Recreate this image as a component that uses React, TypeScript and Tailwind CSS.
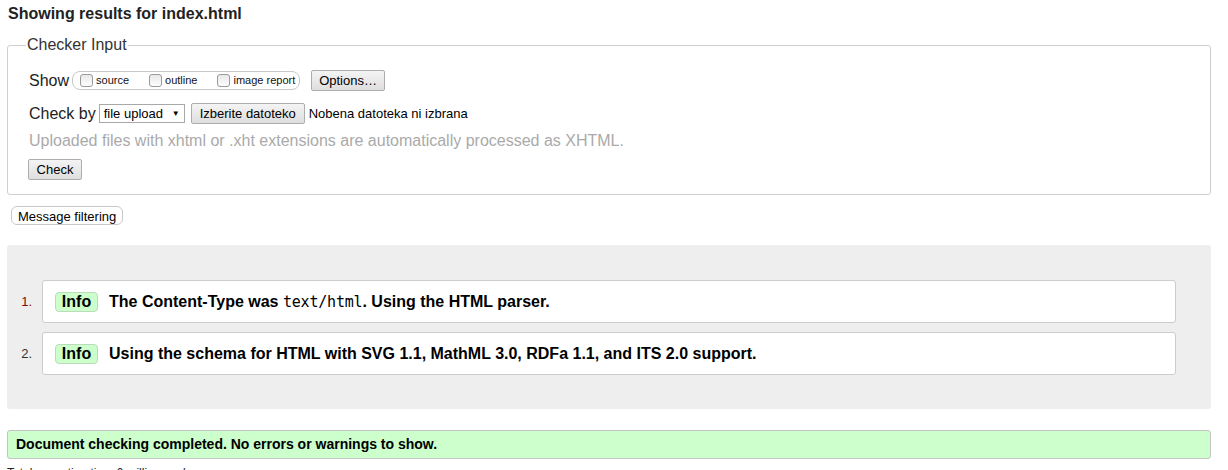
import React from 'react';

const btn =
  'inline-flex items-center justify-center h-[21px] px-[7px] text-[13px] text-black border border-[#adadad] rounded-[2px] bg-gradient-to-b from-[#f4f4f4] to-[#dedede]';

const Checkbox: React.FC<{ label: string; className?: string }> = ({ label, className }) => (
  <span className={`inline-flex items-center ${className ?? ''}`}>
    <span className="w-[13px] h-[13px] rounded-[3px] border border-[#9a9a9a] bg-gradient-to-b from-[#e9e9e9] to-[#fdfdfd]" />
    <span className="ml-[3px] text-[11px] leading-[13px] text-[#111]">{label}</span>
  </span>
);

type Msg = { n: number; active?: boolean; body: React.ReactNode };

const messages: Msg[] = [
  {
    n: 1,
    active: true,
    body: (
      <>
        The Content-Type was{' '}
        <code className="font-normal text-[15px] font-['DejaVu_Sans_Mono',monospace] tracking-[-0.2px]">text/html</code>.
        Using the HTML parser.
      </>
    ),
  },
  {
    n: 2,
    body: <>Using the schema for HTML with SVG 1.1, MathML 3.0, RDFa 1.1, and ITS 2.0 support.</>,
  },
];

export default function App() {
  return (
    <div className="w-[1228px] h-[470px] overflow-hidden bg-white text-[#222] font-['Liberation_Sans',Arial,sans-serif]">
      <div className="pl-[7px] pr-[17px]">
        {/* Naslov */}
        <h2 className="pl-[1px] pt-[4px] text-[16px] leading-[20px] font-bold text-[#222]">
          Showing results for index.html
        </h2>

        {/* Checker input */}
        <fieldset className="mt-[12px] border border-[#cfcfcf] rounded-[3px] px-[21px] pb-[13px]">
          <legend className="px-[1px] ml-[-3px] text-[16px] leading-[18px] text-[#333]">Checker Input</legend>

          <div className="mt-[16px] flex items-center h-[21px]">
            <span className="text-[16px] text-[#222]">Show</span>
            <span className="ml-[3px] flex items-center h-[19px] w-[228px] pl-[7px] border border-[#c8c8c8] rounded-[8px]">
              <Checkbox label="source" />
              <Checkbox label="outline" className="ml-[20px]" />
              <Checkbox label="image report" className="ml-[20px]" />
            </span>
            <button className={`${btn} ml-[11px] w-[74px]`}>Options…</button>
          </div>

          <div className="mt-[12px] flex items-center h-[21px]">
            <span className="text-[16px] text-[#222]">Check by</span>
            <span className="ml-[3px] flex items-center h-[19px] w-[86px] px-[4px] border border-[#a9a9a9] bg-white text-[13px] text-black">
              file upload
              <span className="ml-auto text-[8px]">▼</span>
            </span>
            <button className={`${btn} ml-[6px] w-[114px]`}>Izberite datoteko</button>
            <span className="ml-[4px] text-[13px] text-black">Nobena datoteka ni izbrana</span>
          </div>

          <p className="mt-[8px] text-[16px] leading-[18px] text-[#aaa]">
            Uploaded files with xhtml or .xht extensions are automatically processed as XHTML.
          </p>

          <div className="mt-[7px]">
            <button className={`${btn} w-[54px] ml-[-1px]`}>Check</button>
          </div>
        </fieldset>

        <button className="mt-[11px] ml-[4px] h-[19px] px-[6px] text-[13px] text-black bg-white border border-[#c8c8c8] rounded-[6px]">
          Message filtering
        </button>

        {/* Rezultati */}
        <ol className="mt-[17px] bg-[#eeeeee] rounded-[3px] pt-[35px] pb-[34px] pl-[13px] pr-[35px] flex flex-col gap-[9px]">
          {messages.map((m) => (
            <li key={m.n} className="flex items-center">
              <span className={`w-[22px] pr-[10px] text-right text-[13px] ${m.active ? 'text-[#7a1010]' : 'text-[#333]'}`}>
                {m.n}.
              </span>
              <div className="flex-1 h-[43px] flex items-center bg-white border border-[#cccccc] rounded-[3px] pl-[12px]">
                <span className="h-[20px] w-[43px] flex items-center justify-center bg-[#ccffcc] border border-[#b9dcb9] rounded-[4px] text-[16px] font-bold text-black">
                  Info
                </span>
                <span className="ml-[11px] text-[16px] font-bold text-black">{m.body}</span>
              </div>
            </li>
          ))}
        </ol>

        <div className="mt-[21px] h-[29px] flex items-center pl-[8px] bg-[#ccffcc] border border-[#c4c4c4] rounded-[3px] text-[14px] font-bold text-black">
          Document checking completed. No errors or warnings to show.
        </div>

        <p className="mt-[7px] text-[12px] leading-[14px] text-[#222]">Total execution time 6 milliseconds.</p>
      </div>
    </div>
  );
}
